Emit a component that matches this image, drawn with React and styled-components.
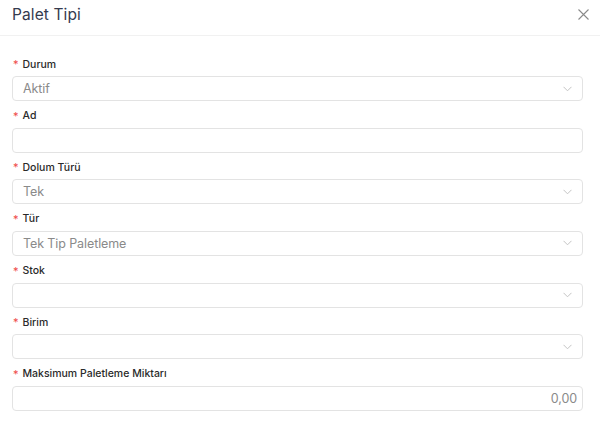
import React from "react";
import styled, { createGlobalStyle } from "styled-components";

const GlobalStyle = createGlobalStyle`
  html, body {
    margin: 0;
    padding: 0;
    background: #ffffff;
    font-family: "Inter", "Noto Sans", sans-serif;
  }
  * { box-sizing: border-box; }
`;

const Modal = styled.div`
  width: 600px;
  height: 429px;
  background: #ffffff;
  display: flex;
  flex-direction: column;
`;

const Header = styled.div`
  height: 36px;
  padding: 0 10px 0 12px;
  display: flex;
  align-items: center;
  justify-content: space-between;
  border-bottom: 1px solid #f1f1f1;
`;

const Title = styled.h2`
  margin: 0;
  font-size: 15.5px;
  font-weight: 400;
  color: #343a4e;
  letter-spacing: 0.1px;
  transform: translateY(-3px);
`;

const CloseButton = styled.button`
  border: none;
  background: none;
  padding: 0;
  width: 14px;
  height: 14px;
  display: flex;
  align-items: center;
  justify-content: center;
  cursor: pointer;
  transform: translateY(-3px);
`;

const Body = styled.div`
  padding: 20px 17px 0 12px;
  display: flex;
  flex-direction: column;
  gap: 6.67px;
`;

const Field = styled.div`
  display: flex;
  flex-direction: column;
  gap: 4px;
`;

const Label = styled.label`
  height: 16px;
  display: flex;
  align-items: center;
  font-size: 10.5px;
  font-weight: 500;
  color: #2a2a2a;
  padding-left: 1px;
`;

const Star = styled.span`
  color: #ef4b4b;
  font-size: 11px;
  margin-right: 4px;
  font-weight: 400;
`;

const Box = styled.div`
  height: 25px;
  border: 1px solid #e3e3e3;
  border-radius: 4px;
  padding: ${(p) => (p.$right ? "0 5px 0 10px" : "0 10px")};
  display: flex;
  align-items: center;
  justify-content: ${(p) => (p.$right ? "flex-end" : "space-between")};
  font-size: 12.5px;
  color: #8a8a8a;
  letter-spacing: -0.1px;
`;

const Chevron = () => (
  <svg width="9" height="6" viewBox="0 0 9 6" fill="none">
    <path d="M0.5 0.8 L4.5 4.8 L8.5 0.8" stroke="#c4c4c4" strokeWidth="1" />
  </svg>
);

const fields = [
  { label: "Durum", value: "Aktif", select: true },
  { label: "Ad", value: "" },
  { label: "Dolum Türü", value: "Tek", select: true },
  { label: "Tür", value: "Tek Tip Paletleme", select: true },
  { label: "Stok", value: "", select: true },
  { label: "Birim", value: "", select: true },
  { label: "Maksimum Paletleme Miktarı", value: "0,00", right: true },
];

export default function App() {
  return (
    <>
      <GlobalStyle />
      <Modal>
        <Header>
          <Title>Palet Tipi</Title>
          <CloseButton aria-label="Kapat">
            <svg width="11" height="11" viewBox="0 0 11 11">
              <path d="M0.5 0.5 L10.5 10.5 M10.5 0.5 L0.5 10.5" stroke="#8a8a8a" strokeWidth="1.1" />
            </svg>
          </CloseButton>
        </Header>
        <Body>
          {fields.map((f) => (
            <Field key={f.label}>
              <Label>
                <Star>*</Star>
                {f.label}
              </Label>
              <Box $right={f.right}>
                <span>{f.value}</span>
                {f.select && <Chevron />}
              </Box>
            </Field>
          ))}
        </Body>
      </Modal>
    </>
  );
}
